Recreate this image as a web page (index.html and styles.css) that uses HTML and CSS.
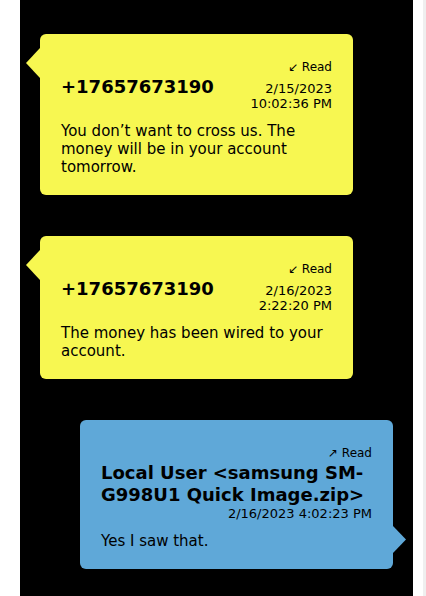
FILE: index.html
```html
<!DOCTYPE html>
<html lang="en">
<head>
<meta charset="utf-8">
<title>Messages</title>
<link rel="stylesheet" href="styles.css">
</head>
<body>
<div class="page">
  <div class="gutter"></div>
  <main class="thread">
    <div class="msg in">
      <div class="status">↙ Read</div>
      <div class="head">
        <div class="name">+17657673190</div>
        <div class="time"><span>2/15/2023</span> <span>10:02:36 PM</span></div>
      </div>
      <div class="text">You don’t want to cross us. The money will be in your account tomorrow.</div>
    </div>
    <div class="msg in">
      <div class="status">↙ Read</div>
      <div class="head">
        <div class="name">+17657673190</div>
        <div class="time"><span>2/16/2023</span> <span>2:22:20 PM</span></div>
      </div>
      <div class="text">The money has been wired to your account.</div>
    </div>
    <div class="msg out">
      <div class="status">↗ Read</div>
      <div class="head stack">
        <div class="name">Local User &lt;samsung SM-G998U1 Quick Image.zip&gt;</div>
        <div class="time"><span>2/16/2023</span> <span>4:02:23 PM</span></div>
      </div>
      <div class="text">Yes I saw that.</div>
    </div>
  </main>
  <div class="spacer"></div>
  <div class="scrolltrack"></div>
</div>
</body>
</html>
```
FILE: styles.css
```css
html, body {
  margin: 0;
  background: #ffffff;
}
body {
  font-family: "DejaVu Sans", Verdana, sans-serif;
  color: #000000;
}
.page {
  display: flex;
  height: 596px;
  overflow: hidden;
}
.gutter {
  width: 20px;
  flex: none;
}
.thread {
  width: 393px;
  flex: none;
  box-sizing: border-box;
  background: #000000;
  padding: 34px 20px 0;
  display: flex;
  flex-direction: column;
  gap: 41px;
}
.spacer {
  width: 10px;
  flex: none;
}
.scrolltrack {
  width: 3px;
  flex: none;
  background: #efefef;
}
.msg {
  position: relative;
  width: 313px;
  box-sizing: border-box;
  padding: 26px 21px 19px;
  border-radius: 6px;
}
.msg.in {
  background: #f7f751;
  align-self: flex-start;
}
.msg.out {
  background: #5fa8d8;
  align-self: flex-end;
}
.msg::before {
  content: "";
  position: absolute;
  width: 14px;
  height: 30px;
  background: inherit;
}
.msg.in::before {
  left: -14px;
  top: 14px;
  clip-path: polygon(100% 0, 0 50%, 100% 100%);
}
.msg.out::before {
  right: -13px;
  bottom: 16px;
  width: 13px;
  height: 27px;
  clip-path: polygon(0 0, 100% 50%, 0 100%);
}
.status {
  font-size: 12px;
  line-height: 14px;
  text-align: right;
  margin-bottom: 2px;
}
.head {
  display: flex;
  align-items: baseline;
  justify-content: space-between;
}
.name {
  font-weight: bold;
  font-size: 18px;
  line-height: 22px;
}
.time {
  font-size: 13px;
  line-height: 15px;
  text-align: right;
}
.time span {
  display: block;
}
.head.stack {
  flex-direction: column;
  align-items: stretch;
}
.head.stack .time span {
  display: inline;
}
.text {
  font-size: 15px;
  line-height: 18px;
  margin-top: 11px;
}
```
